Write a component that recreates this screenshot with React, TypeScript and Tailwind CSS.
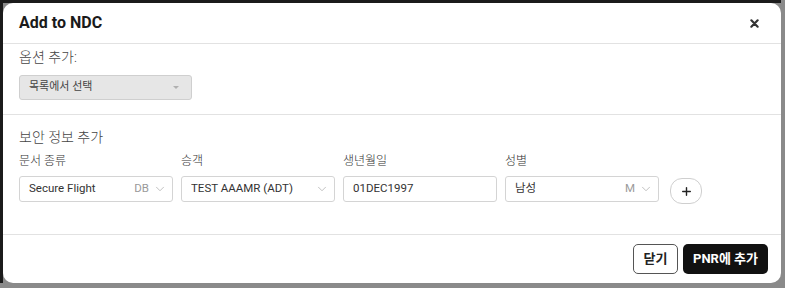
import { ChevronDown, Plus } from 'lucide-react'

const FONT = "font-['Roboto','Noto_Sans_CJK_KR',sans-serif]"

const fields = [
  { label: '문서 종류', value: 'Secure Flight', code: 'DB', chevron: true },
  { label: '승객', value: 'TEST AAAMR (ADT)', code: '', chevron: true },
  { label: '생년월일', value: '01DEC1997', code: '', chevron: false },
  { label: '성별', value: '남성', code: 'M', chevron: true },
]

function CloseIcon() {
  return (
    <svg width="9" height="9" viewBox="0 0 10 10" className="text-[#333]">
      <path d="M1.5 1.5 L8.5 8.5 M8.5 1.5 L1.5 8.5" stroke="currentColor" strokeWidth="2.4" strokeLinecap="round" />
    </svg>
  )
}

function Field({ label, value, code, chevron }: { label: string; value: string; code: string; chevron: boolean }) {
  return (
    <div className="flex w-[154px] flex-col">
      <span className="text-[12px] font-light leading-[16px] text-[#333]">{label}</span>
      <div className="mt-[7px] flex h-[26px] items-center rounded-[3px] border border-[#d4d4d4] bg-white pl-[9px] pr-[5px]">
        <span className="flex-1 truncate text-[11.5px] text-[#333]">{value}</span>
        {code && <span className="mr-[4px] text-[11.5px] text-[#9a9a9a]">{code}</span>}
        {chevron && <ChevronDown size={14} strokeWidth={1.2} className="text-[#a8a8a8]" />}
      </div>
    </div>
  )
}

export default function App() {
  return (
    <div className={`h-[288px] w-[785px] bg-[#8a8a8a] ${FONT}`}>
      <div className="h-[283px] w-[781px] border-l-[3px] border-t-[3px] border-[#1b1b1b] bg-[#8a8a8a]">
        <div className="flex h-full w-[778px] flex-col overflow-hidden rounded-[10px] bg-white">
          <div className="flex h-[41px] shrink-0 items-center justify-between border-b border-[#e2e2e2] pl-[16px] pr-[22px]">
            <span className="text-[16px] font-bold text-[#1a1a1a]">Add to NDC</span>
            <CloseIcon />
          </div>

          <div className="flex flex-col border-b border-[#e2e2e2] px-[16px] pb-[14px] pt-[3px]">
            <span className="text-[14px] font-light leading-[20px] text-[#444]">옵션 추가:</span>
            <div className="mt-[8px] flex h-[25px] w-[173px] items-center justify-between rounded-[3px] border border-[#cfcfcf] bg-[#e6e6e6] pl-[9px] pr-[12px]">
              <span className="text-[11px] text-[#444]">목록에서 선택</span>
              <svg width="6" height="4" viewBox="0 0 6 4">
                <path d="M0 0 L6 0 L3 3 Z" fill="#b0b0b0" />
              </svg>
            </div>
          </div>

          <div className="flex flex-col border-b border-[#e2e2e2] px-[16px] pb-[32px] pt-[12px]">
            <span className="text-[14px] font-light leading-[20px] text-[#444]">보안 정보 추가</span>
            <div className="mt-[6px] flex items-end gap-[8px]">
              {fields.map((f) => (
                <Field key={f.label} {...f} />
              ))}
              <button className="mb-[-2px] ml-[3px] flex h-[26px] w-[32px] items-center justify-center rounded-[12px] border border-[#cfcfcf] bg-white">
                <Plus size={13} strokeWidth={2.6} className="text-[#222]" />
              </button>
            </div>
          </div>

          <div className="flex flex-1 items-start justify-end gap-[5px] pr-[13px] pt-[9px]">
            <button className="h-[30px] w-[45px] rounded-[5px] border border-[#555] bg-white text-[13px] font-bold text-[#222]">
              닫기
            </button>
            <button className="h-[30px] w-[85px] rounded-[5px] bg-[#111] text-[13px] font-bold text-white">
              PNR에 추가
            </button>
          </div>
        </div>
      </div>
    </div>
  )
}
